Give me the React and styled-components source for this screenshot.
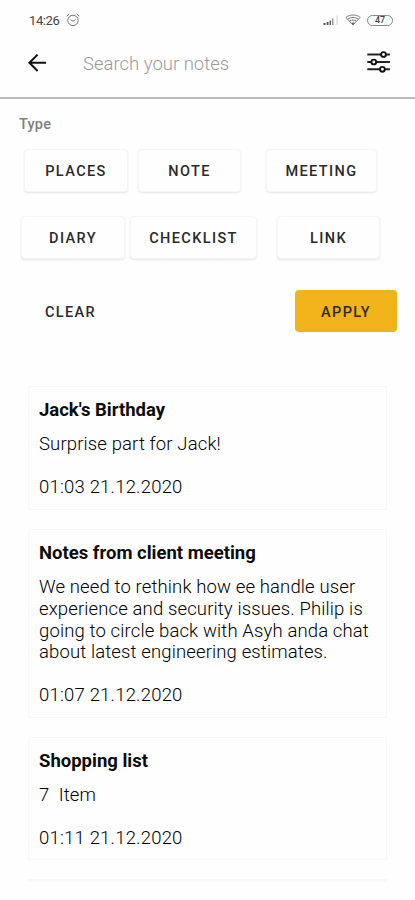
import React from "react";
import styled, { createGlobalStyle } from "styled-components";

const typeRows = [
  {
    start: 24,
    items: [
      { label: "PLACES", width: 104, gap: 10 },
      { label: "NOTE", width: 103, gap: 25 },
      { label: "MEETING", width: 111, gap: 0 },
    ],
  },
  {
    start: 21,
    items: [
      { label: "DIARY", width: 104, gap: 5 },
      { label: "CHECKLIST", width: 127, gap: 20 },
      { label: "LINK", width: 103, gap: 0 },
    ],
  },
];

const notes = [
  {
    title: "Jack's Birthday",
    lines: ["Surprise part for Jack!"],
    date: "01:03 21.12.2020",
    height: 124,
  },
  {
    title: "Notes from client meeting",
    lines: [
      "We need to rethink how ee handle user",
      "experience and security issues. Philip is",
      "going to circle back with Asyh anda chat",
      "about latest engineering estimates.",
    ],
    date: "01:07 21.12.2020",
    height: 189,
  },
  {
    title: "Shopping list",
    lines: ["7  Item"],
    date: "01:11 21.12.2020",
    height: 123,
  },
];

const AlarmIcon = () => (
  <svg width="14" height="14" viewBox="0 0 14 14" fill="none" stroke="#777">
    <circle cx="7" cy="7.4" r="5.2" />
    <path d="M4.6 6.6 7 8.3l2.4-1.7M.8 3.2 3.4.9M13.2 3.2 10.6.9" />
  </svg>
);

const SignalIcon = () => (
  <svg width="16" height="12" viewBox="0 0 16 12">
    <path d="M.5 9h2v2h-2zM3.700 8h1.800v3H3.700z" fill="#555" />
    <path d="M6.500 6.500h1.600V11H6.500z" fill="#666" />
    <path d="M9 4.500h1.500V11H9z" fill="#999" />
    <path d="M13 1.500h2V11h-2z" fill="#e8e8e8" />
  </svg>
);

const WifiIcon = () => (
  <svg width="16" height="12" viewBox="0 0 16 12" fill="none" stroke="#777">
    <path d="M.8 3.500C4.500.2 11.500.2 15.200 3.500L8 11z" strokeWidth=".9" />
    <path d="M2.600 5.200c3-2.300 7.800-2.300 10.800 0M4.500 7.200c2-1.500 5-1.500 7 0" />
    <path d="M6.500 9.200c.9-.6 2.100-.6 3 0L8 11z" fill="#666" strokeWidth=".6" />
  </svg>
);

const BackIcon = () => (
  <svg width="20" height="20" viewBox="0 0 20 20" fill="none" stroke="#111" strokeWidth="2">
    <path d="M19 10.800H2.500M10.600 2.600 2.400 10.800l8.200 8.200" />
  </svg>
);

const SlidersIcon = () => (
  <svg width="24" height="24" viewBox="0 0 24 24" fill="none" stroke="#222" strokeWidth="1.900">
    <path d="M.3 4.500h13.700M18.900 4.500h4M.3 12h4M9.200 12h13.700M.3 19.300h12.700M17.900 19.300h5" />
    <circle cx="16.500" cy="4.500" r="2.400" stroke="#111" />
    <circle cx="6.800" cy="12" r="2.400" stroke="#111" />
    <circle cx="15.400" cy="19.300" r="2.400" stroke="#111" />
  </svg>
);

const App = () => {
  return (
    <Screen>
      <GlobalStyle />
      <StatusBar>
        <Clock>14:26</Clock>
        <AlarmIcon />
        <StatusIcons>
          <SignalIcon />
          <WifiIcon />
          <Battery>47</Battery>
        </StatusIcons>
      </StatusBar>
      <SearchBar>
        <IconButton aria-label="Back">
          <BackIcon />
        </IconButton>
        <SearchInput placeholder="Search your notes" />
        <IconButton aria-label="Filters">
          <SlidersIcon />
        </IconButton>
      </SearchBar>
      <FilterPanel>
        <FilterTitle>Type</FilterTitle>
        {typeRows.map((row) => (
          <ChipRow key={row.start} $start={row.start}>
            {row.items.map((item) => (
              <Chip key={item.label} $width={item.width} $gap={item.gap}>
                {item.label}
              </Chip>
            ))}
          </ChipRow>
        ))}
        <Actions>
          <ClearButton>CLEAR</ClearButton>
          <ApplyButton>APPLY</ApplyButton>
        </Actions>
      </FilterPanel>
      <NoteList>
        {notes.map((note) => (
          <NoteCard key={note.title} $height={note.height}>
            <NoteTitle>{note.title}</NoteTitle>
            <NoteText>{note.lines.join("\n")}</NoteText>
            <NoteDate>{note.date}</NoteDate>
          </NoteCard>
        ))}
        <NextCard />
      </NoteList>
    </Screen>
  );
};

const GlobalStyle = createGlobalStyle`
  * {
    box-sizing: border-box;
  }

  body {
    margin: 0;
    background: #fefefe;
    font-family: Roboto, sans-serif;
  }
`;

const Screen = styled.div`
  display: flex;
  flex-direction: column;
  width: 415px;
  height: 900px;
  overflow: hidden;
  background: #fefefe;
`;

const StatusBar = styled.div`
  display: flex;
  align-items: center;
  height: 40px;
  padding: 0 22px 0 29px;
  flex-shrink: 0;
`;

const Clock = styled.span`
  width: 37px;
  font-size: 13px;
  letter-spacing: -0.4px;
  color: #444;
`;

const StatusIcons = styled.div`
  display: flex;
  align-items: center;
  gap: 6px;
  margin-left: auto;
`;

const Battery = styled.div`
  width: 26px;
  height: 11px;
  border: 1px solid #888;
  border-radius: 6px;
  color: #444;
  font-size: 9px;
  font-weight: 500;
  line-height: 9.5px;
  text-align: center;
`;

const SearchBar = styled.div`
  display: flex;
  align-items: center;
  height: 59px;
  padding: 0 24px 13px 27px;
  border-bottom: 2px solid #bcbcbc;
  flex-shrink: 0;
`;

const IconButton = styled.button`
  display: flex;
  padding: 0;
  border: none;
  background: none;
`;

const SearchInput = styled.input`
  flex: 1;
  min-width: 0;
  margin-left: 36px;
  padding: 4px 0 0;
  border: none;
  outline: none;
  background: none;
  font: 300 18.5px Roboto, sans-serif;

  &::placeholder {
    color: #9b9b9b;
  }
`;

const FilterPanel = styled.div`
  height: 287px;
  padding-top: 16px;
  flex-shrink: 0;
`;

const FilterTitle = styled.div`
  height: 34px;
  padding-left: 19px;
  color: #808080;
  font-size: 14.5px;
  font-weight: 500;
  letter-spacing: 0.2px;
  line-height: 19px;
`;

const ChipRow = styled.div`
  display: flex;
  height: 67px;
  padding-left: ${(props) => props.$start}px;
`;

const Button = styled.button`
  height: 43px;
  padding: 2px 0 0;
  border: none;
  border-radius: 4px;
  background: none;
  color: #2a2a2a;
  font: 500 14.5px Roboto, sans-serif;
  letter-spacing: 1.4px;
`;

const Chip = styled(Button)`
  width: ${(props) => props.$width}px;
  margin-right: ${(props) => props.$gap}px;
  background: #fefefe;
  border: 1px solid #f5f5f5;
  box-shadow: 0 1px 2px rgba(0, 0, 0, 0.1);
`;

const Actions = styled.div`
  display: flex;
  justify-content: space-between;
  padding: 7px 18px 0 20px;
`;

const ClearButton = styled(Button)`
  width: 101px;
`;

const ApplyButton = styled(Button)`
  width: 102px;
  height: 42px;
  background: #f0b41a;
`;

const NoteList = styled.div`
  display: flex;
  flex-direction: column;
  gap: 19px;
  padding: 0 28px;
`;

const NoteCard = styled.div`
  height: ${(props) => props.$height}px;
  padding: 12px 10px 10px;
  border: 1px solid #f7f7f7;
  flex-shrink: 0;
`;

const NextCard = styled.div`
  height: 3px;
  background: #f8f8f8;
`;

const NoteTitle = styled.div`
  color: #0c0c0c;
  font-size: 18.5px;
  font-weight: 700;
  line-height: 22px;
`;

const NoteText = styled.div`
  margin-top: 13px;
  color: #000;
  font-size: 18.5px;
  font-weight: 300;
  letter-spacing: 0.13px;
  line-height: 21.8px;
  white-space: pre;
`;

const NoteDate = styled(NoteText)`
  margin-top: 21px;
  letter-spacing: 0.2px;
`;

export default App;
